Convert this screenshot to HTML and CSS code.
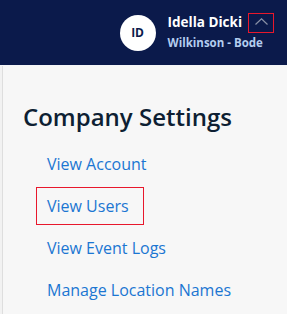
FILE: index.html
```html
<!DOCTYPE html>
<html lang="en">
<head>
    <meta charset="UTF-8">
    <meta name="viewport" content="width=device-width, initial-scale=1.0">
    <title>Company Settings</title>
    <link rel="stylesheet" href="styles.css">
</head>
<body>
    <header class="topbar">
        <div class="avatar">ID</div>
        <div class="user">
            <div class="user-row">
                <span class="user-name">Idella Dicki</span>
                <button class="user-toggle" aria-label="Collapse menu">
                    <svg width="13" height="7" viewBox="0 0 13 7"><path d="M0.5 6.5 L6.5 0.8 L12.5 6.5" fill="none" stroke="#8a91a6" stroke-width="1.2"/></svg>
                </button>
            </div>
            <div class="user-org">Wilkinson - Bode</div>
        </div>
    </header>

    <main class="settings">
        <h1>Company Settings</h1>
        <ul class="settings-links">
            <li><a href="#">View Account</a></li>
            <li><a href="#" class="focused">View Users</a></li>
            <li><a href="#">View Event Logs</a></li>
            <li><a href="#">Manage Location Names</a></li>
        </ul>
    </main>
</body>
</html>
```

FILE: styles.css
```css
body, html {
    margin: 0;
    padding: 0;
    width: 100%;
    height: 100%;
    overflow: hidden;
    font-family: "Open Sans", Arial, sans-serif;
    background: #f2f2f2;
}
body {
    display: flex;
    flex-direction: column;
}
.topbar {
    display: flex;
    justify-content: flex-end;
    align-items: center;
    flex: none;
    height: 65px;
    padding-right: 13px;
    background: #0b1a4b;
    border-bottom: 1px solid #f4f5f8;
}
.avatar {
    display: flex;
    align-items: center;
    justify-content: center;
    width: 36px;
    height: 36px;
    border-radius: 50%;
    background: #fff;
    color: #0b1a4b;
    font-size: 12px;
    font-weight: 700;
    margin-right: 12px;
}
.user-row {
    display: flex;
    align-items: center;
}
.user-name {
    color: #fff;
    font-size: 13.5px;
    font-weight: 700;
    line-height: 21px;
}
.user-toggle {
    display: flex;
    align-items: center;
    justify-content: center;
    width: 26px;
    height: 20px;
    margin-left: 6px;
    padding: 0 0 2px;
    background: none;
    border: 1px solid #e8182c;
    cursor: pointer;
}
.user-org {
    color: #b3cdef;
    font-size: 11.5px;
    font-weight: 700;
    line-height: 20px;
}
.settings {
    flex: 1;
    margin-left: 2px;
    padding: 35px 20px 0;
    background: #f7f7f7;
    border-left: 1px solid #dedede;
}
.settings h1 {
    margin: 0 0 12px;
    color: #0e1f33;
    font-size: 24px;
    font-weight: 600;
    line-height: 32px;
}
.settings-links {
    list-style: none;
    margin: 0;
    padding: 0 0 0 13px;
}
.settings-links li {
    margin-bottom: 4px;
}
.settings-links a {
    display: inline-block;
    padding: 8px 14px 8px 10px;
    color: #1b76d2;
    font-size: 16px;
    font-weight: 500;
    line-height: 20px;
    text-decoration: none;
    border: 1px solid transparent;
}
.settings-links a.focused {
    border-color: #e8182c;
}
```
